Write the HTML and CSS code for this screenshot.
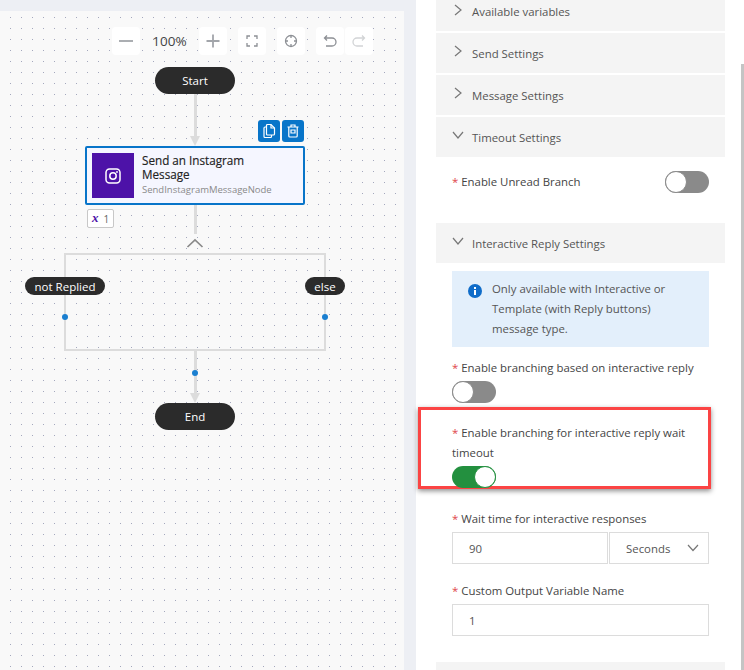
FILE: index.html
```html
<!DOCTYPE html>
<html lang="en">
<head>
<meta charset="utf-8">
<title>Flow editor</title>
<link rel="stylesheet" href="styles.css">
</head>
<body>
<main class="page">
  <section class="canvas">
    <div class="toolbar">
      <button class="tool"><svg width="18" height="18" viewBox="0 0 18 18"><path d="M2 9h14" class="ico"/></svg></button>
      <span class="zoom">100%</span>
      <button class="tool"><svg width="18" height="18" viewBox="0 0 18 18"><path d="M2.500 9h13M9 2.500v13" class="ico"/></svg></button>
      <button class="tool tool-gap"><svg width="14" height="14" viewBox="0 0 14 14"><path d="M2 5V2h3M9 2h3v3M12 9v3H9M5 12H2V9" class="ico thin"/></svg></button>
      <button class="tool tool-gap"><svg width="14" height="14" viewBox="0 0 14 14"><circle cx="7" cy="7" r="5.500" class="ico thin"/><path d="M7 1v3M7 10v3M1 7h3M10 7h3" class="ico thin"/></svg></button>
      <button class="tool tool-gap"><svg width="14" height="14" viewBox="0 0 14 14"><path d="M4 1.500 1.500 4 4 6.500M1.500 4H9a3.500 3.500 0 0 1 0 8H3" class="ico thin"/></svg></button>
      <button class="tool tool-tight"><svg width="14" height="14" viewBox="0 0 14 14"><path d="M10 1.500 12.500 4 10 6.500M12.500 4H5a3.500 3.500 0 0 0 0 8h6" class="ico thin faint"/></svg></button>
    </div>

    <div class="wire w-start"></div>
    <div class="arrow a-node"></div>
    <div class="pill p-start">Start</div>

    <div class="node-actions">
      <button class="act"><svg width="16" height="16" viewBox="0 0 16 16"><path d="M6.500 1.500H10l3.500 3.500v6a1 1 0 0 1-1 1h-6a1 1 0 0 1-1-1V2.500a1 1 0 0 1 1-1Z" class="wh"/><path d="M5.500 4H4a1 1 0 0 0-1 1v8.500a1 1 0 0 0 1 1h5.500a1 1 0 0 0 1-1V12M10 1.500V5h3.500" class="wh"/></svg></button>
      <button class="act"><svg width="16" height="16" viewBox="0 0 16 16"><path d="M2.500 4h11M6 4V2h4v2M3.800 4v9a1 1 0 0 0 1 1h6.400a1 1 0 0 0 1-1V4M6 7h4v3H6Z" class="wh"/></svg></button>
    </div>
    <article class="node">
      <div class="node-icon"><svg width="16" height="16" viewBox="0 0 16 16"><rect x="1" y="1" width="14" height="14" rx="3.500" class="wh2"/><circle cx="8" cy="8" r="3.200" class="wh2"/><circle cx="12" cy="4" r=".9" fill="#fff"/></svg></div>
      <div class="node-text">
        <div class="node-title">Send an Instagram Message</div>
        <div class="node-sub">SendInstagramMessageNode</div>
      </div>
    </article>
    <div class="var-badge"><span class="var-x">x</span><span>1</span></div>

    <div class="wire w-node"></div>
    <svg class="chevron" width="18" height="10" viewBox="0 0 18 10"><path d="M1.500 9 9 2l7.500 7" fill="none" stroke="#8a8a8a" stroke-width="1.700"/></svg>
    <div class="branch"></div>
    <div class="pill tag t-left">not Replied</div>
    <div class="pill tag t-right">else</div>
    <span class="dot d-left"></span>
    <span class="dot d-right"></span>
    <div class="wire w-end"></div>
    <span class="dot d-end"></span>
    <div class="arrow a-end"></div>
    <div class="pill p-end">End</div>
  </section>

  <aside class="panel">
    <div class="head head-first"><svg class="chev" viewBox="0 0 10 12"><path d="M2 1l6 5-6 5"/></svg>Available variables</div>
    <div class="head"><svg class="chev" viewBox="0 0 10 12"><path d="M2 1l6 5-6 5"/></svg>Send Settings</div>
    <div class="head"><svg class="chev" viewBox="0 0 10 12"><path d="M2 1l6 5-6 5"/></svg>Message Settings</div>
    <div class="head"><svg class="chev down" viewBox="0 0 12 10"><path d="M1 2l5 6 5-6"/></svg>Timeout Settings</div>
    <div class="row-field">
      <label class="label"><span class="req">*</span> Enable Unread Branch</label>
      <span class="toggle"><span class="knob"></span></span>
    </div>
    <div class="head head-interactive"><svg class="chev down" viewBox="0 0 12 10"><path d="M1 2l5 6 5-6"/></svg>Interactive Reply Settings</div>
    <div class="body">
      <div class="info">
        <svg class="info-icon" width="14" height="14" viewBox="0 0 14 14"><circle cx="7" cy="7" r="7" fill="#0f6cc9"/><rect x="6" y="6" width="2" height="5" fill="#fff"/><rect x="6" y="3" width="2" height="2" fill="#fff"/></svg>
        <p class="info-text">Only available with Interactive or Template (with Reply buttons) message type.</p>
      </div>
      <div class="field f-branch">
        <label class="label"><span class="req">*</span> Enable branching based on interactive reply</label>
        <span class="toggle"><span class="knob"></span></span>
      </div>
      <div class="field f-timeout">
        <div class="highlight"></div>
        <label class="label label-wrap"><span class="req">*</span> Enable branching for interactive reply wait timeout</label>
        <span class="toggle on"><span class="knob"></span></span>
      </div>
      <div class="field f-wait">
        <label class="label"><span class="req">*</span> Wait time for interactive responses</label>
        <div class="combo">
          <div class="input grow">90</div>
          <div class="input select">Seconds<svg class="sel-chev" viewBox="0 0 12 8"><path d="M1 1l5 5.500L11 1"/></svg></div>
        </div>
      </div>
      <div class="field f-custom">
        <label class="label"><span class="req">*</span> Custom Output Variable Name</label>
        <div class="input">1</div>
      </div>
    </div>
    <div class="head head-last"></div>
    <div class="scrollbar"></div>
  </aside>
</main>
</body>
</html>
```

FILE: styles.css
```css
* { box-sizing: border-box; }
html, body { margin: 0; height: 100%; overflow: hidden; }
body { background: #edeff4; font-family: "Open Sans", "Noto Sans", sans-serif; color: #333; }
button { padding: 0; border: 0; font: inherit; }

.page { display: flex; gap: 12px; width: 744px; height: 670px; overflow: hidden; }

.canvas {
  position: relative; flex: 0 0 404px; height: 659px; margin-top: 11px;
  background-color: #f9f9f9;
  background-image: radial-gradient(circle at .5px .5px, #a4a8bd 0 .7px, transparent .8px);
  background-size: 11px 11px;
  background-position: 10px 6px;
}
.toolbar { position: absolute; left: 112px; top: 16px; display: flex; align-items: center; }
.tool { display: flex; align-items: center; justify-content: center; width: 28px; height: 28px; background: #fff; border-radius: 4px; }
.tool-gap { margin-left: 11px; }
.tool-tight { margin-left: 1px; }
.zoom { width: 59px; text-align: center; font-size: 13.500px; color: #444; }
.ico { fill: none; stroke: #a2a5aa; stroke-width: 1.800; }
.thin { stroke-width: 1.300; stroke: #8d9095; }
.faint { stroke: #d2d4d6; }

.pill { position: absolute; display: flex; align-items: center; justify-content: center; background: #2b2b2b; color: #fff; border-radius: 14px; font-size: 11.500px; }
.p-start { left: 155px; top: 56px; width: 80px; height: 27px; }
.p-end { left: 155px; top: 392px; width: 80px; height: 27px; }
.tag { height: 18px; border-radius: 9px; }
.t-left { left: 25px; top: 266px; width: 80px; }
.t-right { left: 305px; top: 266px; width: 40px; }

.wire { position: absolute; left: 194px; width: 3px; background: #dcdcdc; }
.w-start { top: 83px; height: 46px; }
.w-node { top: 194px; height: 29px; }
.w-end { top: 340px; height: 44px; }
.arrow { position: absolute; left: 190px; width: 0; height: 0; border-left: 5.500px solid transparent; border-right: 5.500px solid transparent; border-top: 10px solid #dcdcdc; }
.a-node { top: 125px; }
.a-end { top: 382px; }

.node-actions { position: absolute; left: 258px; top: 109px; display: flex; gap: 2px; }
.act { display: flex; align-items: center; justify-content: center; width: 22px; height: 22px; background: #0875c9; border-radius: 3px; }
.wh { fill: none; stroke: #fff; stroke-width: 1.200; }
.wh2 { fill: none; stroke: #fff; stroke-width: 1.500; }

.node { position: absolute; left: 85px; top: 135px; display: flex; width: 220px; height: 59px; padding: 5px 6px 5px 5px; gap: 8px; background: #f5f6ff; border: 2px solid #0875c9; border-radius: 2px; }
.node-icon { flex: 0 0 42px; display: flex; align-items: center; justify-content: center; background: #4d12a8; }
.node-title { font-size: 11.700px; line-height: 14px; color: #222; width: 120px; -webkit-text-stroke: .15px #222; }
.node-sub { margin-top: 2px; font-size: 9.500px; line-height: 14px; color: #8a8a8a; }

.var-badge { position: absolute; left: 87px; top: 198px; display: flex; align-items: center; justify-content: center; gap: 5px; width: 27px; height: 19px; background: #fff; border: 1px solid #c8c8c8; border-radius: 2px; font-size: 10px; color: #666; }
.var-x { font: italic bold 13px/1 "Liberation Serif", serif; color: #4d12a8; margin-top: -2px; }

.chevron { position: absolute; left: 186px; top: 227px; }
.branch { position: absolute; left: 64px; top: 242px; width: 262px; height: 98px; border: 2px solid #dcdcdc; }
.dot { position: absolute; width: 6px; height: 6px; border-radius: 50%; background: #1a7fd0; }
.d-left { left: 62px; top: 303px; }
.d-right { left: 322px; top: 303px; }
.d-end { left: 192px; top: 359px; }

.panel { position: relative; flex: 0 0 328px; height: 670px; padding: 0 19px 0 20px; background: #fff; font-size: 11.400px; }
.head { display: flex; align-items: center; height: 40px; margin-bottom: 2px; padding-left: 17px; background: #f4f4f4; color: #555; }
.head-first { height: 31px; align-items: flex-start; line-height: 24px; }
.head-interactive { margin-bottom: 0; }
.head-last { margin: 26px 0 0; }
.chev { width: 10px; height: 12px; margin-right: 9px; margin-top: -4px; flex: none; fill: none; stroke: #777; stroke-width: 1.200; }
.head-first .chev { margin-top: 4px; }
.chev.down { width: 12px; height: 10px; margin-left: -1px; margin-right: 8px; }

.row-field { display: flex; justify-content: space-between; align-items: center; height: 22px; margin: 14px 16px 30px; }
.label { display: block; line-height: 20px; color: #444; }
.label-wrap { width: 240px; }
.req { color: #e0464a; }

.toggle { display: block; position: relative; width: 44px; height: 22px; background: #8a8a8a; border-radius: 11px; }
.knob { position: absolute; left: 0; top: 0; width: 22px; height: 22px; background: #fff; border: 1px solid #8a8a8a; border-radius: 50%; }
.toggle.on { background: #23903f; }
.on .knob { left: 22px; border-color: #23903f; }

.body { padding: 8px 16px 0; }
.info { display: flex; gap: 10px; height: 76px; padding: 8px 16px; background: #e3effb; }
.info-icon { flex: none; margin-top: 5px; }
.info-text { margin: 0; width: 190px; line-height: 20px; color: #555; }

.field { position: relative; }
.f-branch { margin-top: 11px; }
.f-branch .label { margin-bottom: 3px; }
.f-timeout { margin-top: 20px; }
.f-timeout .label { margin-bottom: 3px; }
.f-wait { margin-top: 21px; }
.f-custom { margin-top: 17px; }
.f-wait .label, .f-custom .label { margin-bottom: 3px; }

.highlight { position: absolute; left: -34px; top: -16px; width: 293px; height: 82px; border: 3px solid #fb4444; box-shadow: 0 2px 5px rgba(0, 0, 0, .45); pointer-events: none; }

.combo { display: flex; gap: 1px; }
.input { display: flex; align-items: center; height: 32px; padding: 0 16px; background: #fff; border: 1px solid #dcdcdc; color: #555; }
.grow { flex: 1; }
.select { position: relative; width: 100px; }
.sel-chev { position: absolute; right: 9px; top: 11px; width: 12px; height: 8px; fill: none; stroke: #777; stroke-width: 1.200; }

.scrollbar { position: absolute; right: 0; top: 64px; width: 3px; height: 606px; background: #c4c4c4; }
```
